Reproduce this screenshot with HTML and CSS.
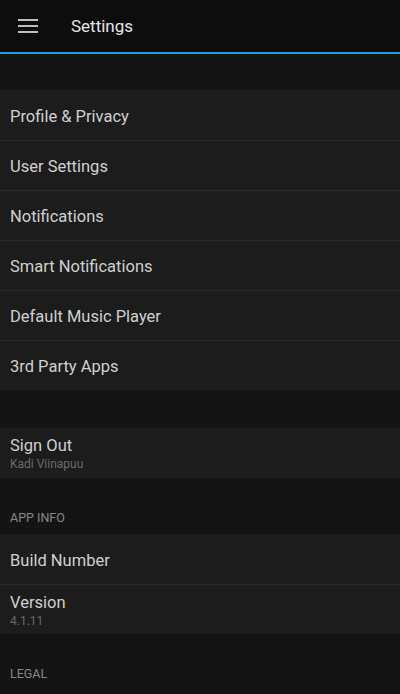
FILE: index.html
```html
<!DOCTYPE html>
<html>
<head>
<meta charset="utf-8">
<link rel="stylesheet" href="styles.css">
</head>
<body>
<header class="appbar">
  <svg class="menu" width="20" height="14" viewBox="0 0 20 14"><rect x="0" y="0" width="20" height="2" fill="#bdbdbd"/><rect x="0" y="6" width="20" height="2" fill="#bdbdbd"/><rect x="0" y="12" width="20" height="2" fill="#bdbdbd"/></svg>
  <span class="title">Settings</span>
</header>
<main class="content">
  <div class="spacer"></div>
  <section class="group">
    <div class="item">Profile &amp; Privacy</div>
    <div class="item">User Settings</div>
    <div class="item">Notifications</div>
    <div class="item">Smart Notifications</div>
    <div class="item">Default Music Player</div>
    <div class="item">3rd Party Apps</div>
  </section>
  <div class="spacer gap"></div>
  <section class="group">
    <div class="item two"><span class="main">Sign Out</span><span class="sub">Kadi Viinapuu</span></div>
  </section>
  <div class="section-head">APP INFO</div>
  <section class="group">
    <div class="item">Build Number</div>
    <div class="item two"><span class="main">Version</span><span class="sub">4.1.11</span></div>
  </section>
  <div class="section-head">LEGAL</div>
</main>
</body>
</html>
```
FILE: styles.css
```css
html, body {
  margin: 0;
  padding: 0;
  background: #141414;
  font-family: Roboto, "Liberation Sans", sans-serif;
  color: #dedede;
}
.appbar {
  height: 52px;
  background: #0d0d0d;
  border-bottom: 2px solid #1e9fdc;
  display: flex;
  align-items: center;
}
.menu {
  margin-left: 18px;
  margin-right: 33px;
}
.title {
  font-size: 17px;
  color: #e6e6e6;
}
.spacer {
  height: 36px;
}
.spacer.gap {
  height: 38px;
}
.group {
  background: #1c1c1c;
}
.item {
  height: 50px;
  box-sizing: border-box;
  padding-left: 10px;
  padding-top: 2px;
  display: flex;
  align-items: center;
  font-size: 16.5px;
  color: #d0d0d0;
  border-top: 1px solid #2a2a2a;
}
.group .item:first-child {
  border-top: none;
}
.item.two {
  flex-direction: column;
  align-items: flex-start;
  justify-content: center;
}
.item .main {
  font-size: 16.5px;
  line-height: 20px;
}
.item .sub {
  font-size: 12px;
  line-height: 16px;
  color: #6a6a6a;
}
.section-head {
  height: 56px;
  box-sizing: border-box;
  padding: 32px 0 0 10px;
  font-size: 12.5px;
  line-height: 15px;
  color: #888888;
}
```
